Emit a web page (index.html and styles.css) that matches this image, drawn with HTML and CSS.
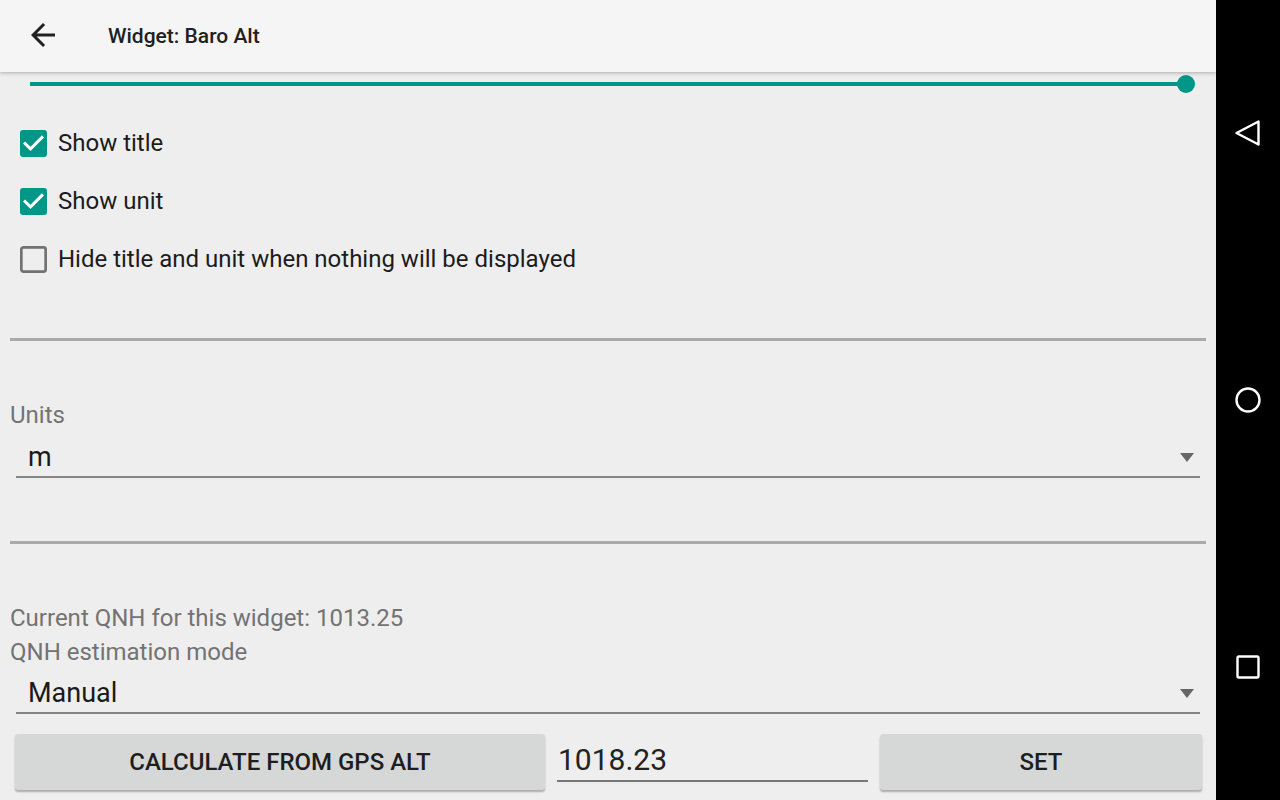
FILE: index.html
```html
<!DOCTYPE html>
<html>
  <head>
    <meta charset="UTF-8" />
    <meta name="viewport" content="width=device-width, initial-scale=1.0" />
    <title>Widget: Baro Alt</title>
    <link rel="stylesheet" href="styles.css">
  </head>
  <body>
    <div class="screen">
      <div class="app">
        <header class="toolbar">
          <svg class="back" viewBox="0 0 24 24" width="36" height="36">
            <path d="M20 11H7.83l5.59-5.59L12 4l-8 8 8 8 1.41-1.41L7.83 13H20v-2z" fill="#212121" />
          </svg>
          <h1 class="title">Widget: Baro Alt</h1>
        </header>

        <main class="content">
          <div class="slider">
            <div class="track"></div>
            <div class="thumb"></div>
          </div>

          <ul class="checks">
            <li class="check">
              <svg class="box" viewBox="3 3 18 18" width="27" height="27">
                <rect x="3" y="3" width="18" height="18" rx="2" fill="#009688" />
                <path d="M10 17l-5-5 1.41-1.41L10 14.17l7.59-7.59L19 8l-9 9z" fill="#fff" />
              </svg>
              Show title
            </li>
            <li class="check">
              <svg class="box" viewBox="3 3 18 18" width="27" height="27">
                <rect x="3" y="3" width="18" height="18" rx="2" fill="#009688" />
                <path d="M10 17l-5-5 1.41-1.41L10 14.17l7.59-7.59L19 8l-9 9z" fill="#fff" />
              </svg>
              Show unit
            </li>
            <li class="check">
              <svg class="box" viewBox="3 3 18 18" width="27" height="27">
                <rect x="3.9" y="3.9" width="16.2" height="16.2" rx="1.4" fill="none" stroke="#727272" stroke-width="1.8" />
              </svg>
              Hide title and unit when nothing will be displayed
            </li>
          </ul>

          <hr class="divider first" />

          <div class="label units">Units</div>
          <div class="spinner">
            <span class="value">m</span>
            <span class="caret"></span>
          </div>

          <hr class="divider second" />

          <div class="label qnh-current">Current QNH for this widget: 1013.25</div>
          <div class="label">QNH estimation mode</div>
          <div class="spinner mode">
            <span class="value">Manual</span>
            <span class="caret"></span>
          </div>

          <div class="actions">
            <button class="btn calc">CALCULATE FROM GPS ALT</button>
            <input class="qnh-input" type="text" value="1018.23" />
            <button class="btn set">SET</button>
          </div>
        </main>
      </div>

      <nav class="navbar">
        <svg viewBox="0 0 30 30" width="30" height="30">
          <path d="M3.5 15 L25.5 3.5 L25.5 26.5 Z" fill="none" stroke="#fff" stroke-width="2.4" stroke-linejoin="round" />
        </svg>
        <svg viewBox="0 0 30 30" width="30" height="30">
          <circle cx="15" cy="15" r="11.5" fill="none" stroke="#fff" stroke-width="2.4" />
        </svg>
        <svg viewBox="0 0 30 30" width="30" height="30">
          <rect x="4.5" y="4.5" width="21" height="21" rx="1.5" fill="none" stroke="#fff" stroke-width="2.4" />
        </svg>
      </nav>
    </div>
  </body>
</html>
```

FILE: styles.css
```css
html,
body {
  margin: 0;
  height: 100%;
  overflow: hidden;
}
body {
  font-family: Roboto, "Liberation Sans", Arial, sans-serif;
  background-color: #000;
  color: #212121;
}
.screen {
  display: flex;
  height: 800px;
}
.app {
  width: 1216px;
  display: flex;
  flex-direction: column;
  background-color: #eeeeee;
}

/* toolbar */
.toolbar {
  height: 72px;
  flex-shrink: 0;
  display: flex;
  align-items: center;
  padding-left: 25px;
  background-color: #f5f5f5;
  box-shadow: 0 1px 4px rgba(0, 0, 0, 0.28);
  position: relative;
  z-index: 1;
}
.back {
  display: block;
  margin-top: -2px;
}
.title {
  margin: 0 0 0 47px;
  font-size: 21px;
  font-weight: 500;
  color: #212121;
}

/* slider */
.slider {
  height: 24px;
  display: flex;
  align-items: center;
  padding: 0 30px;
}
.track {
  flex: 1;
  height: 4px;
  background-color: #009688;
}
.thumb {
  width: 18px;
  height: 18px;
  border-radius: 50%;
  background-color: #009688;
  margin: 0 -9px;
}

/* checkboxes */
.checks {
  list-style: none;
  margin: 18px 0 0;
  padding: 0;
}
.check {
  height: 58px;
  display: flex;
  align-items: center;
  padding-left: 20px;
  font-size: 24px;
  color: #1c1c1c;
}
.box {
  display: block;
  margin-right: 11px;
}

.divider {
  border: none;
  height: 3px;
  background-color: #a9a9a9;
  margin: 0 10px;
}
.divider.first {
  margin-top: 50px;
}
.divider.second {
  margin-top: 63px;
}

/* labels and spinners */
.label {
  padding-left: 10px;
  font-size: 24px;
  line-height: 34px;
  color: #737373;
}
.units {
  margin-top: 57px;
}
.qnh-current {
  margin-top: 57px;
}
.spinner {
  height: 38px;
  margin: 6px 16px 0;
  padding: 0 6px 0 12px;
  display: flex;
  align-items: center;
  justify-content: space-between;
  border-bottom: 2px solid #858585;
}
.spinner .value {
  font-size: 27px;
  color: #1a1a1a;
}
.spinner.mode {
  margin-top: 5px;
}
.caret {
  width: 0;
  height: 0;
  border-left: 7.5px solid transparent;
  border-right: 7.5px solid transparent;
  border-top: 9px solid #666;
}

/* action row */
.actions {
  display: flex;
  align-items: flex-start;
  gap: 12px;
  margin-top: 20px;
  padding: 0 14px 0 15px;
}
.btn {
  height: 56px;
  border: none;
  border-radius: 3px;
  background-color: #d6d7d7;
  box-shadow: 0 2px 2px rgba(0, 0, 0, 0.28);
  font-family: Roboto, "Liberation Sans", Arial, sans-serif;
  font-size: 24px;
  font-weight: 500;
  color: #1e1e1e;
  padding: 0;
}
.calc {
  width: 530px;
}
.set {
  width: 322px;
}
.qnh-input {
  width: 311px;
  height: 48px;
  box-sizing: border-box;
  padding: 4px 0 0 1px;
  border: none;
  border-bottom: 2px solid #777;
  background: transparent;
  font-family: Roboto, "Liberation Sans", Arial, sans-serif;
  font-size: 30px;
  color: #222;
  outline: none;
}

/* system nav bar */
.navbar {
  flex: 1;
  display: flex;
  flex-direction: column;
  align-items: center;
  justify-content: space-around;
  background-color: #000;
}
.navbar svg {
  display: block;
}
```
